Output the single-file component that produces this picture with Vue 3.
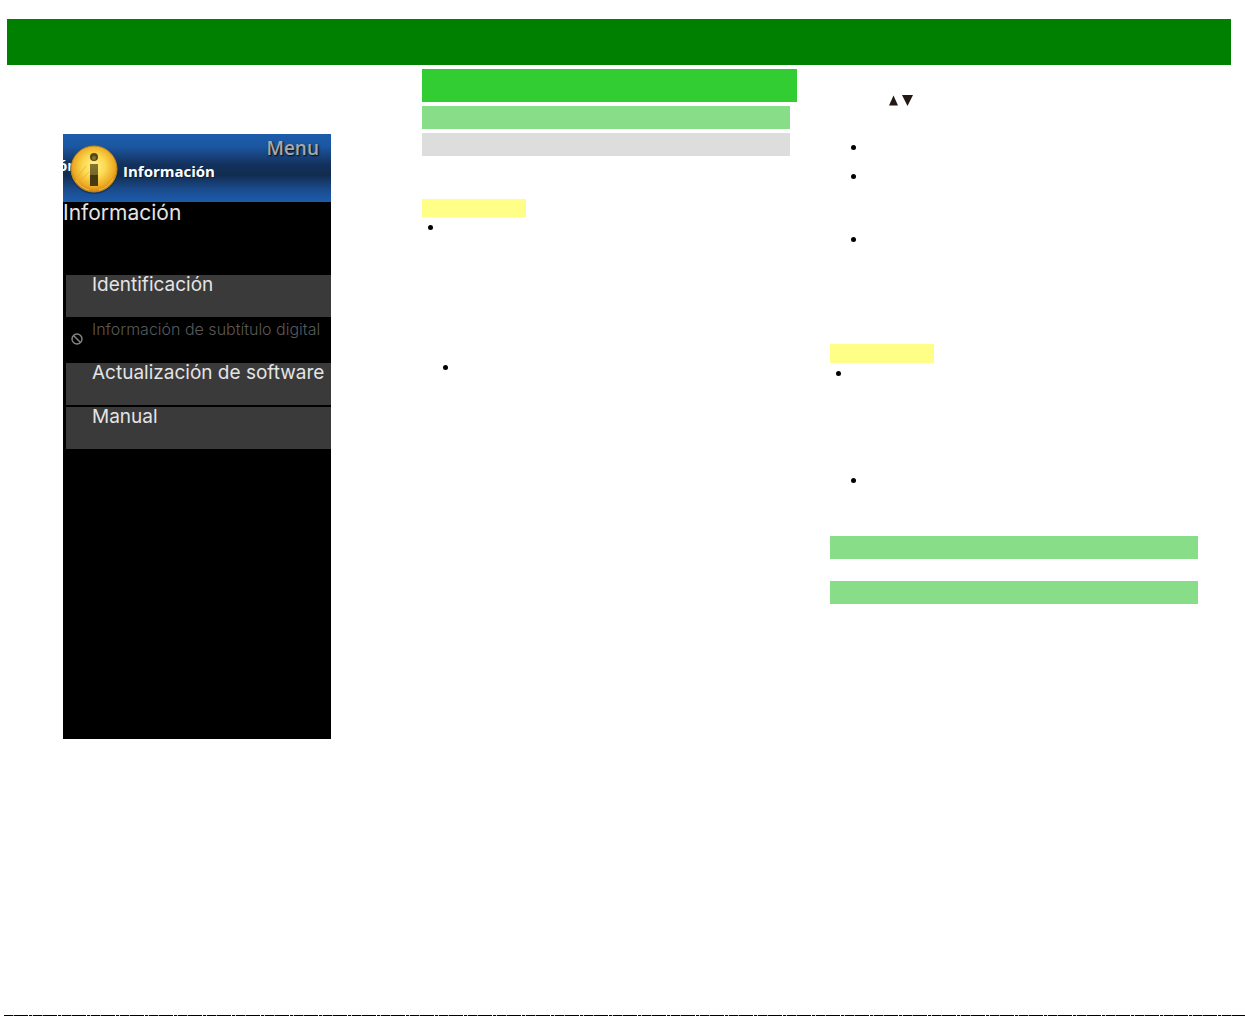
<script setup>
const items = [
  { label: 'Identificación', disabled: false },
  { label: 'Información de subtítulo digital', disabled: true },
  { label: 'Actualización de software', disabled: false },
  { label: 'Manual', disabled: false },
]
</script>

<template>
  <div class="page">
    <header class="banner"></header>
    <main class="columns">
      <section class="column">
        <div class="tv">
          <div class="tv-head">
            <span class="previous">ón</span>
            <svg class="info" viewBox="0 0 50 50" width="50" height="50" aria-hidden="true">
              <defs>
                <radialGradient id="gold" cx="50%" cy="44%" r="56%">
                  <stop offset="0" stop-color="#fff48a" />
                  <stop offset=".45" stop-color="#fbd850" />
                  <stop offset=".8" stop-color="#eeab24" />
                  <stop offset="1" stop-color="#cf8410" />
                </radialGradient>
                <linearGradient id="stem" x1="0" y1="0" x2="0" y2="1">
                  <stop offset="0" stop-color="#85762f" />
                  <stop offset=".5" stop-color="#75672a" />
                  <stop offset=".5" stop-color="#43370f" />
                  <stop offset="1" stop-color="#4b3b10" />
                </linearGradient>
              </defs>
              <circle cx="25" cy="26" r="24" fill="#0b2a55" opacity=".6" />
              <circle cx="25" cy="25" r="23" fill="url(#gold)" stroke="#c08a18" />
              <path d="M7 36 Q12 44 20 46 M30 46 Q40 43 44 35" fill="none" stroke="#f8cf55" opacity=".7" />
              <path d="M7 35 L17 22 M10 38 L20 28" stroke="#e9a92c" opacity=".6" />
              <circle cx="25" cy="13" r="4" fill="#574716" />
              <circle cx="25" cy="14" r="2" fill="#85762f" />
              <rect x="21" y="20" width="8" height="22" fill="url(#stem)" />
            </svg>
            <strong class="current">Información</strong>
            <span class="menu-word">Menu</span>
          </div>
          <h1 class="tv-title">Información</h1>
          <ul class="items">
            <li v-for="item in items" :key="item.label">
              <button type="button" class="item" :disabled="item.disabled">
                <span class="mark">
                  <svg v-if="item.disabled" viewBox="0 0 12 12" width="12" height="12" aria-hidden="true">
                    <circle cx="6" cy="6" r="5" fill="none" stroke="#858585" stroke-width="1.4" />
                    <path d="M2.5 2.5 L9.5 9.5" stroke="#858585" stroke-width="1.4" />
                  </svg>
                </span>
                <span>{{ item.label }}</span>
              </button>
            </li>
          </ul>
        </div>
      </section>

      <section class="column">
        <div class="bar chapter"></div>
        <div class="bar topic"></div>
        <div class="bar subtopic"></div>
        <div class="intro"></div>
        <div class="note"></div>
        <ul class="bullets">
          <li class="long"></li>
          <li class="nested"></li>
        </ul>
      </section>

      <section class="column">
        <p class="keys">
          <svg viewBox="0 0 24 11" width="24" height="11" role="img" aria-label="Arriba y abajo">
            <path d="M4.500 .5 L9 10.500 H0 Z" fill="#231815" />
            <path d="M13 0 H24 L18.500 11 Z" fill="#231815" />
          </svg>
        </p>
        <ul class="bullets steps">
          <li class="nested short"></li>
          <li class="nested middle"></li>
          <li class="nested tall"></li>
        </ul>
        <div class="note high"></div>
        <ul class="bullets">
          <li class="tall"></li>
          <li class="nested"></li>
        </ul>
        <div class="bar topic after-list"></div>
        <div class="bar topic after-line"></div>
      </section>
    </main>
    <footer class="rule"></footer>
  </div>
</template>

<style>
body {
  margin: 0;
  background: #fff;
}
</style>

<style scoped>
.page {
  box-sizing: border-box;
  min-height: 100vh;
  padding: 19px 0 0 4px;
  display: flex;
  flex-direction: column;
  font-family: Inter, "Liberation Sans", sans-serif;
}
.banner {
  height: 46px;
  margin: 0 14px 0 3px;
  background: #008000;
}
.columns {
  flex: 1;
  display: grid;
  grid-template-columns: repeat(3, minmax(0, 1fr));
  margin: 0 14px 0 3px;
}
.column {
  padding: 4px 26px 0 7px;
}
.tv {
  width: 268px;
  min-height: 605px;
  margin: 65px auto 0 49px;
  background: #000;
  color: #e4e4e4;
  overflow: hidden;
}
.tv-head {
  position: relative;
  height: 68px;
  display: flex;
  align-items: flex-start;
  background: linear-gradient(#1c5cab 0%, #1b57a2 18%, #13315c 45%, #122c50 60%, #1a4c8e 82%, #1c5cab 100%);
  font-family: "Open Sans", "Noto Sans", sans-serif;
  color: #fff;
}
.previous {
  position: absolute;
  left: -5px;
  top: 20px;
  font-size: 15px;
  line-height: 22px;
  font-weight: 700;
}
.info {
  position: relative;
  flex: none;
  margin: 10px 4px 0 6px;
}
.current {
  font-size: 15px;
  line-height: 22px;
  margin-top: 26px;
  text-shadow: 1px 1px 1px #0a1f3d;
}
.menu-word {
  margin: 2px 12px 0 auto;
  font-size: 19px;
  line-height: 24px;
  font-weight: 600;
  color: #a9a9a9;
  text-shadow: 1px 1px 2px #000;
}
.tv-title {
  margin: 0;
  height: 73px;
  font-size: 21px;
  line-height: 22px;
  font-weight: 400;
}
.items {
  list-style: none;
  margin: 0;
  padding: 0 0 0 3px;
  display: flex;
  flex-direction: column;
  gap: 2px;
}
.item {
  display: flex;
  align-items: flex-start;
  width: 100%;
  height: 42px;
  padding: 0;
  border: 0;
  background: #3a3a3a;
  color: #e4e4e4;
  font: 400 19px/20px Inter, "Liberation Sans", sans-serif;
  text-align: left;
  white-space: nowrap;
}
.item:disabled {
  background: #000;
  color: #595959;
  font-size: 16px;
  font-weight: 300;
}
.mark {
  flex: none;
  box-sizing: border-box;
  width: 26px;
  padding: 14px 0 0 5px;
  line-height: 0;
}
.bar {
  margin: 0 7px 4px 0;
  height: 23px;
}
.chapter {
  height: 33px;
  margin-right: 0;
  background: #32cd32;
}
.topic {
  background: #88de88;
}
.subtopic {
  background: #ddd;
}
.intro {
  height: 39px;
}
.note {
  width: 104px;
  height: 18px;
  background: #ffff88;
}
.high {
  height: 19px;
}
.bullets {
  list-style: none;
  margin: 0;
  padding: 8px 0 0 6px;
}
.bullets li::before {
  content: "";
  display: block;
  width: 5px;
  height: 5px;
  border-radius: 50%;
  background: #000;
}
.bullets .nested {
  padding-left: 15px;
}
.bullets .short {
  height: 29px;
}
.bullets .middle {
  height: 63px;
}
.bullets .tall {
  height: 107px;
}
.bullets .long {
  height: 140px;
}
.keys {
  margin: 26px 0 0 59px;
  line-height: 0;
}
.steps {
  padding-top: 39px;
}
.after-list {
  margin-top: 53px;
}
.after-line {
  margin-top: 22px;
}
.rule {
  height: 1px;
  background: repeating-linear-gradient(90deg, #000 0 9px, #999 9px 10px, #000 10px 24px, #fff 24px 25px, #000 25px 28px, #ccc 28px 29px);
}
</style>
